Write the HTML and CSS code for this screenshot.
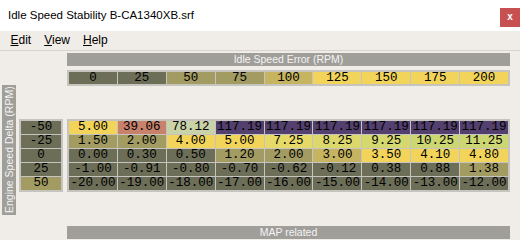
FILE: index.html
```html
<!DOCTYPE html>
<html>
	<head>
		<meta charset="utf-8">
		<title>Idle Speed Stability B-CA1340XB.srf</title>
		<link rel="stylesheet" href="styles.css">
	</head>
	<body>
		<div class="titlebar">
			<span class="title">Idle Speed Stability B-CA1340XB.srf</span>
			<span class="close">x</span>
		</div>
		<div class="menubar">
			<span class="menu"><u>E</u>dit</span>
			<span class="menu"><u>V</u>iew</span>
			<span class="menu"><u>H</u>elp</span>
		</div>
		<div class="editor">
			<div class="axis axis_x">Idle Speed Error (RPM)</div>
			<div class="cells col_head">
				<div class="dark">0</div>
				<div class="dark">25</div>
				<div class="khaki">50</div>
				<div class="khaki">75</div>
				<div class="tan">100</div>
				<div class="yel">125</div>
				<div class="yel">150</div>
				<div class="yel">175</div>
				<div class="yel">200</div>
			</div>
			<div class="axis axis_y"><span>Engine Speed Delta (RPM)</span></div>
			<div class="cells row_head">
				<div class="dark">-50</div>
				<div class="dark">-25</div>
				<div class="dark">0</div>
				<div class="dark">25</div>
				<div class="khaki">50</div>
			</div>
			<div class="cells data">
				<div class="yel">5.00</div>
				<div class="salmon">39.06</div>
				<div class="sage">78.12</div>
				<div class="purple">117.19</div>
				<div class="purple">117.19</div>
				<div class="purple">117.19</div>
				<div class="purple">117.19</div>
				<div class="purple">117.19</div>
				<div class="purple">117.19</div>

				<div class="khaki">1.50</div>
				<div class="khaki">2.00</div>
				<div class="yel">4.00</div>
				<div class="yel">5.00</div>
				<div class="lime1">7.25</div>
				<div class="lime2">8.25</div>
				<div class="lime3">9.25</div>
				<div class="lime4">10.25</div>
				<div class="lime4">11.25</div>

				<div class="dark">0.00</div>
				<div class="dark">0.30</div>
				<div class="dark">0.50</div>
				<div class="khaki">1.20</div>
				<div class="khaki">2.00</div>
				<div class="tan">3.00</div>
				<div class="yel">3.50</div>
				<div class="yel">4.10</div>
				<div class="yel">4.80</div>

				<div class="dark">-1.00</div>
				<div class="dark">-0.91</div>
				<div class="dark">-0.80</div>
				<div class="dark">-0.70</div>
				<div class="dark">-0.62</div>
				<div class="dark">-0.12</div>
				<div class="dark">0.38</div>
				<div class="dark">0.88</div>
				<div class="khaki">1.38</div>

				<div class="dark">-20.00</div>
				<div class="dark">-19.00</div>
				<div class="dark">-18.00</div>
				<div class="dark">-17.00</div>
				<div class="dark">-16.00</div>
				<div class="dark">-15.00</div>
				<div class="dark">-14.00</div>
				<div class="dark">-13.00</div>
				<div class="dark">-12.00</div>
			</div>
			<div class="axis axis_z">MAP related</div>
		</div>
	</body>
</html>
```

FILE: styles.css
```css
body {
    margin: 0;
    background: #f0ede8;
    font-family: "Liberation Sans", Arial, sans-serif;
    color: black;
}
/* window caption */
.titlebar {
    height: 31px;
    background: #fff;
    display: flex;
    justify-content: space-between;
    align-items: flex-start;
}
.title {
    padding-left: 8px;
    font-size: 11.5px;
    line-height: 31px;
    color: #000;
}
.close {
    margin-top: 8px;
    width: 20px;
    height: 19px;
    background: #c75050;
    color: #fff;
    font-weight: bold;
    font-size: 10px;
    line-height: 18px;
    text-align: center;
}
.menubar {
    height: 19px;
    padding-left: 4px;
    border-bottom: 1px solid #d8d5cf;
    display: flex;
    font-size: 12px;
    line-height: 19px;
}
.menu {
    padding: 0 6.5px;
}
/* table editor */
.editor {
    display: grid;
    grid-template-columns: 17px 48px 443px;
    padding-left: 2px;
}
.axis {
    background: #a09e99;
    color: #f4f4f6;
    font-size: 10.5px;
    text-align: center;
    line-height: 13px;
    height: 13px;
}
.axis_x {
    grid-column: 3;
    grid-row: 1;
    margin-top: 2px;
}
.axis_y {
    grid-column: 1;
    grid-row: 2 / 5;
    justify-self: start;
    align-self: start;
    margin-top: 19px;
    width: 14px;
    height: 130px;
    line-height: 14px;
    writing-mode: vertical-rl;
    transform: rotate(180deg);
}
.axis_z {
    grid-column: 3;
    grid-row: 4;
    margin-top: 34px;
}
.cells {
    display: grid;
    gap: 1px;
    padding: 2px;
    background: #c6c4be;
    box-sizing: border-box;
    font-family: "Liberation Mono", "Courier New", monospace;
    font-size: 12.5px;
}
.cells div {
    text-align: center;
    line-height: 13px;
    height: 13px;
    white-space: nowrap;
    overflow: hidden;
}
.col_head {
    grid-column: 3;
    grid-row: 2;
    margin-top: 4px;
    grid-template-columns: repeat(9, 1fr);
}
.col_head div {
    height: 12px;
    line-height: 12px;
}
.row_head {
    grid-column: 2;
    grid-row: 3;
    margin-top: 33px;
    width: 44px;
    align-self: start;
}
.data {
    grid-column: 3;
    grid-row: 3;
    margin-top: 33px;
    grid-template-columns: repeat(9, 1fr);
}
/* cell colours */
.dark { background: #6c6e58; }
.khaki { background: #a29b62; }
.tan { background: #c6b460; }
.yel { background: #f2d45a; }
.lime1 { background: #e6d968; }
.lime2 { background: #dcd86c; }
.lime3 { background: #d4d86e; }
.lime4 { background: #cdd772; }
.salmon { background: #c8826c; }
.sage { background: #cad2a8; }
.purple { background: #54406e; }
```
